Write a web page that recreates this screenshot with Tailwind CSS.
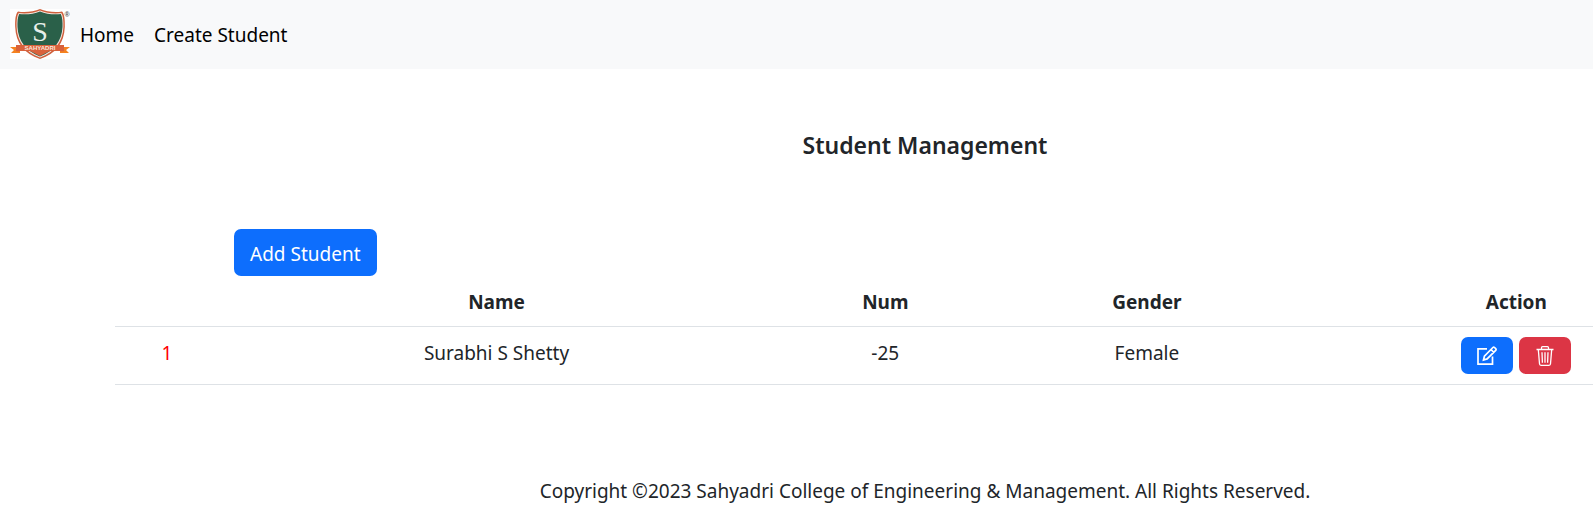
<!DOCTYPE html>
<html lang="en">
<head>
<meta charset="utf-8">
<meta name="viewport" content="width=device-width, initial-scale=1">
<title>Student Management</title>
<script src="https://cdn.jsdelivr.net/npm/@tailwindcss/browser@4"></script>
</head>
<body class="overflow-x-hidden bg-white font-['Segoe_UI','Noto_Sans',sans-serif] text-[19px] leading-[30px] text-[#212529]">
<nav class="flex h-[69px] items-center bg-[#f8f9fa] pl-[10px] text-black">
  <a href="#" aria-label="Sahyadri" class="mt-[9px] block self-start bg-white">
    <svg width="60" height="50" viewBox="0 0 60 50" aria-hidden="true">
      <path d="M0 38h10v6H1l3-3zM60 38H50v6h9l-3-3z" fill="#f58220"/>
      <path d="M30 0C24 2.500 15 4 8 2.500 5.500 5 5 11 5.200 18c.6 16 9 26.500 24.800 32C46 44.500 54.200 34 54.800 18c.2-7-.3-13-2.800-15.500C45 4 36 2.500 30 0z" fill="#cf603c"/>
      <path d="M30 1.500C24 4 15 5.200 8.700 4 6.800 7 6.400 12 6.600 18 7.200 33 15 43 30 48.400c15-5.400 22.800-15.400 23.400-30.400.2-6-.2-11-2.100-14C45 5.200 36 4 30 1.500z" fill="#f3e4dc"/>
      <path d="M30 2.400C24 5 15 6 9.200 4.900 7.600 8 7.300 13 7.500 18 8.100 32 16 42 30 47.400 44 42 51.900 32 52.500 18c.2-5-.1-10-1.700-13.100C45 6 36 5 30 2.400z" fill="#2a6049"/>
      <path d="M6 36h48v6q-2 .5-4 0H10q-2 .5-4 0zM20 42h20l-10 5z" fill="#d9623c"/>
      <text x="30" y="32" text-anchor="middle" font-family="Liberation Serif, serif" font-size="28" fill="#e8efe9">S</text>
      <text x="30" y="41" text-anchor="middle" font-family="Liberation Sans, sans-serif" font-weight="700" font-size="6" fill="#fbe6dc">SAHYADRI</text>
      <text x="57" y="8" text-anchor="middle" font-family="Liberation Sans, sans-serif" font-weight="700" font-size="7" fill="#555">®</text>
    </svg>
  </a>
  <a href="#" class="px-[10px]">Home</a>
  <a href="#" class="px-[10px]">Create Student</a>
</nav>
<main class="-mr-[142px] pl-[115px]">
  <h1 class="pt-[60px] text-center text-[23px] leading-8 font-semibold">Student Management</h1>
  <div class="pt-[68px] pl-[119px]">
    <button type="button" class="block h-[47px] rounded-[7px] bg-[#0d6efd] px-4 pt-[2px] text-white">Add Student</button>
  </div>
  <table class="w-full table-fixed text-center">
    <colgroup><col class="w-[6.4%]"><col class="w-[34.3%]"><col class="w-[13.7%]"><col class="w-[18.6%]"><col></colgroup>
    <thead>
      <tr class="border-b border-[#dee2e6] *:px-[10px] *:pt-[11px] *:pb-[9px] *:font-bold">
        <td></td><th scope="col">Name</th><th scope="col">Num</th><th scope="col">Gender</th><th scope="col">Action</th>
      </tr>
    </thead>
    <tbody>
      <tr class="border-b border-[#dee2e6] align-top">
        <td class="px-[10px] pt-[11px] text-[#ff0000]">1</td>
        <td class="px-[10px] pt-[11px]">Surabhi S Shetty</td>
        <td class="px-[10px] pt-[11px]">-25</td>
        <td class="px-[10px] pt-[11px]">Female</td>
        <td class="p-[10px]">
          <div class="flex justify-center gap-[6px] text-white">
            <button type="button" aria-label="Edit" class="flex h-[37px] w-[52px] items-center justify-center rounded-[7px] bg-[#0d6efd]">
              <svg width="20" height="19" viewBox="0 0 20 19" fill="none" stroke="currentColor" stroke-width="1.700" aria-hidden="true">
                <path d="M10 2.800H1v15.400h14.500V10.500M6.500 14l.9-3.900 8.500-8.600q.8-.8 1.600 0l1.200 1.200q.8.8 0 1.600l-8.600 8.600zM14 3.500l2.800 2.800"/>
              </svg>
            </button>
            <button type="button" aria-label="Delete" class="flex h-[37px] w-[52px] items-center justify-center rounded-[7px] bg-[#dc3545]">
              <svg width="18" height="20" viewBox="0 0 18 20" fill="none" stroke="currentColor" stroke-width="1.300" aria-hidden="true">
                <path d="M.5 3.500h17M5.500 3.500V1.700q0-1 1-1h5q1 0 1 1v1.800M2.300 3.500l1.200 14.300q.1 1.500 1.500 1.500h8q1.400 0 1.500-1.500l1.200-14.300M6 6.200l.4 10.600M9 6.200v10.600M12 6.200l-.4 10.600"/>
              </svg>
            </button>
          </div>
        </td>
      </tr>
    </tbody>
  </table>
  <footer class="pt-[91px] text-center">Copyright ©2023 Sahyadri College of Engineering &amp; Management. All Rights Reserved.</footer>
</main>
</body>
</html>
